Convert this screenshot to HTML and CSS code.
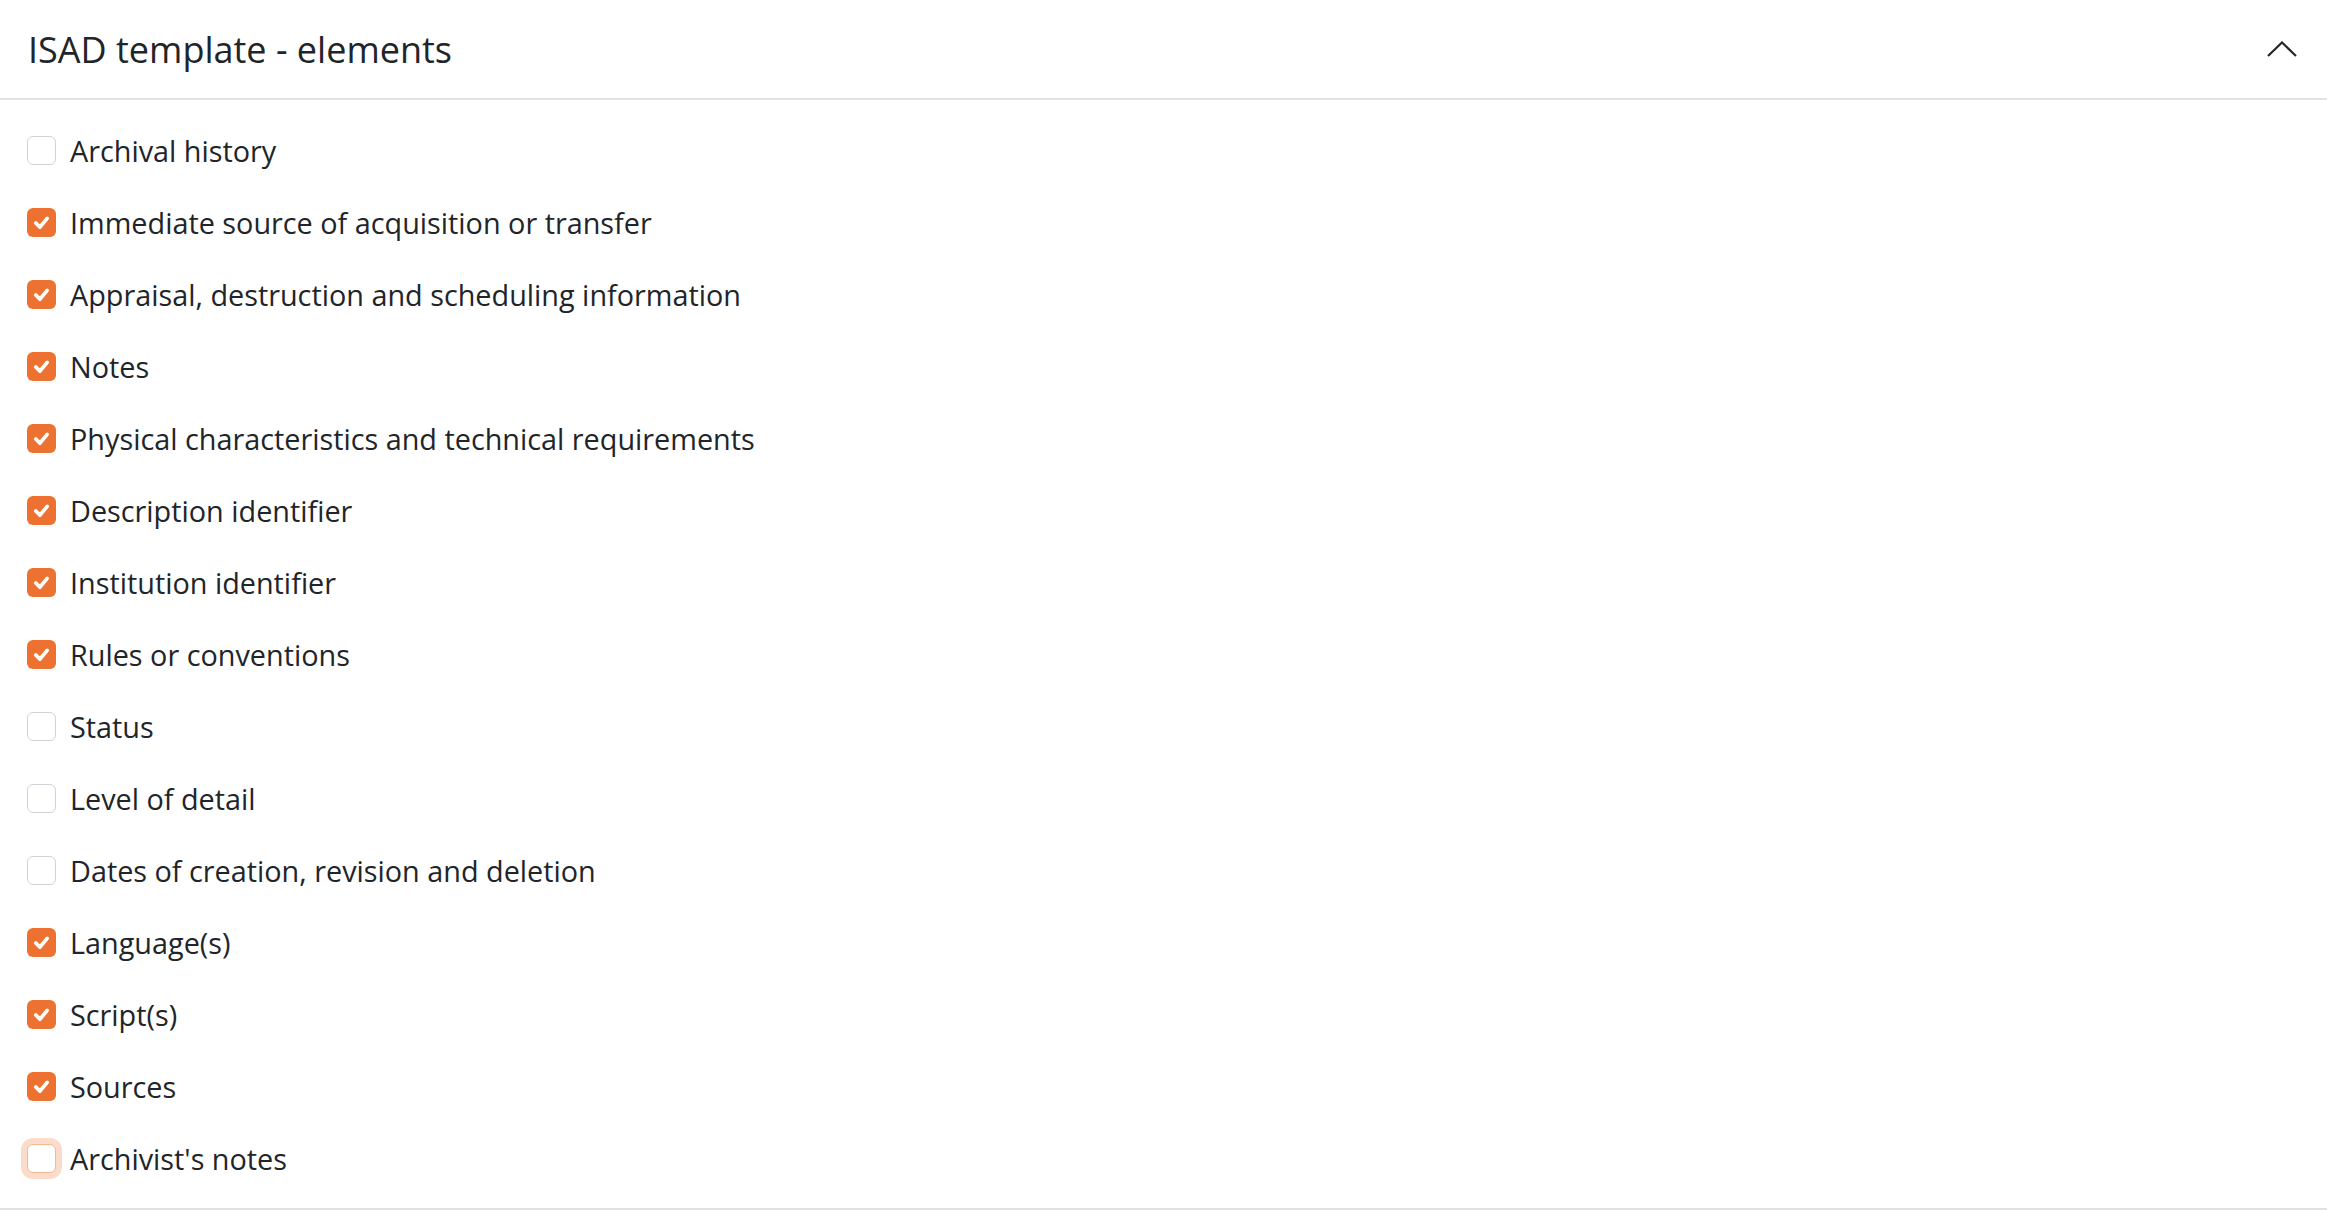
FILE: index.html
```html
<!DOCTYPE html>
<html>
<head>
<meta charset="utf-8">
<title>ISAD template - elements</title>
<link rel="stylesheet" href="styles.css">
</head>
<body>
<div class="panel">
  <div class="panel-head">
    <h2>ISAD template - elements</h2>
    <svg class="chevron" width="30" height="16" viewBox="0 0 30 16"><polyline points="1,15 15,1.5 29,15" fill="none" stroke="#23272b" stroke-width="2.2"/></svg>
  </div>

  <ul class="checks">
    <li><span class="box"></span>Archival history</li>
    <li><span class="box on"><svg viewBox="0 0 28 28"><polyline points="8.5,14.5 12.5,18.5 19.5,10" /></svg></span>Immediate source of acquisition or transfer</li>
    <li><span class="box on"><svg viewBox="0 0 28 28"><polyline points="8.5,14.5 12.5,18.5 19.5,10" /></svg></span>Appraisal, destruction and scheduling information</li>
    <li><span class="box on"><svg viewBox="0 0 28 28"><polyline points="8.5,14.5 12.5,18.5 19.5,10" /></svg></span>Notes</li>
    <li><span class="box on"><svg viewBox="0 0 28 28"><polyline points="8.5,14.5 12.5,18.5 19.5,10" /></svg></span>Physical characteristics and technical requirements</li>
    <li><span class="box on"><svg viewBox="0 0 28 28"><polyline points="8.5,14.5 12.5,18.5 19.5,10" /></svg></span>Description identifier</li>
    <li><span class="box on"><svg viewBox="0 0 28 28"><polyline points="8.5,14.5 12.5,18.5 19.5,10" /></svg></span>Institution identifier</li>
    <li><span class="box on"><svg viewBox="0 0 28 28"><polyline points="8.5,14.5 12.5,18.5 19.5,10" /></svg></span>Rules or conventions</li>
    <li><span class="box"></span>Status</li>
    <li><span class="box"></span>Level of detail</li>
    <li><span class="box"></span>Dates of creation, revision and deletion</li>
    <li><span class="box on"><svg viewBox="0 0 28 28"><polyline points="8.5,14.5 12.5,18.5 19.5,10" /></svg></span>Language(s)</li>
    <li><span class="box on"><svg viewBox="0 0 28 28"><polyline points="8.5,14.5 12.5,18.5 19.5,10" /></svg></span>Script(s)</li>
    <li><span class="box on"><svg viewBox="0 0 28 28"><polyline points="8.5,14.5 12.5,18.5 19.5,10" /></svg></span>Sources</li>
    <li><span class="box focus"></span>Archivist's notes</li>
  </ul>
</div>
</body>
</html>
```

FILE: styles.css
```css
body {
  margin: 0;
  background-color: white;
  font-family: "Open Sans", "Noto Sans", sans-serif;
  color: #212529;
}

.panel {
  border-bottom: 2px solid #dfe2e5;
}

.panel-head {
  display: flex;
  align-items: center;
  justify-content: space-between;
  height: 98px;
  padding: 0 30px 0 28px;
  border-bottom: 2px solid #dfe2e5;
}

.panel-head h2 {
  margin: 0;
  font-size: 36px;
  font-weight: 400;
}

.chevron {
  display: block;
}

.checks {
  list-style: none;
  margin: 0;
  padding: 26px 27px 26px;
  display: flex;
  flex-direction: column;
  gap: 24px;
}

.checks li {
  display: flex;
  align-items: center;
  gap: 14px;
  height: 48px;
  font-size: 28.8px;
}

.box {
  flex: none;
  width: 29px;
  height: 29px;
  box-sizing: border-box;
  border: 1.5px solid #cfd3d7;
  border-radius: 6px;
  background: white;
}

.box svg {
  display: block;
  width: 100%;
  height: 100%;
}

.box svg polyline {
  fill: none;
  stroke: white;
  stroke-width: 3.6;
  stroke-linecap: round;
  stroke-linejoin: round;
}

.box.on {
  background: #ed7131;
  border: none;
}

.box.focus {
  border-color: #f7b68e;
  box-shadow: 0 0 0 6px #fbdccb;
}
```
